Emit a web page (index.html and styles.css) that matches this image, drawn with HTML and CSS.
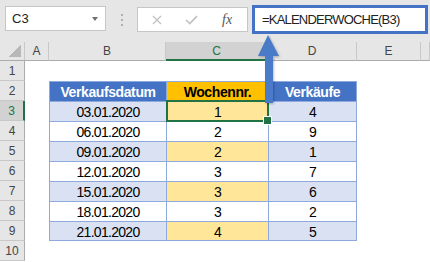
FILE: index.html
```html
<!DOCTYPE html>
<html lang="de">
  <head>
    <meta charset="utf-8">
    <title>KALENDERWOCHE</title>
    <link rel="stylesheet" href="styles.css">
  </head>
  <body>
    <div class="app">
      <div class="bar">
        <div class="namebox"><span>C3</span><i class="caret"></i></div>
        <div class="grip"><i></i><i></i><i></i></div>
        <div class="fxbox">
          <svg class="btn-x" width="10" height="10" viewBox="0 0 10 10"><path d="M1 1L9 9M9 1L1 9" stroke="#c2c2c2" stroke-width="1.3" fill="none"/></svg>
          <svg class="btn-ok" width="13" height="10" viewBox="0 0 13 10"><path d="M1 5L4.8 8.6L12 1.2" stroke="#c2c2c2" stroke-width="1.7" fill="none"/></svg>
          <span class="fx">fx</span>
        </div>
        <div class="formula">=KALENDERWOCHE(B3)</div>
      </div>

      <div class="sheet">
        <div class="ch corner"></div>
        <div class="ch">A</div>
        <div class="ch">B</div>
        <div class="ch sel">C</div>
        <div class="ch">D</div>
        <div class="ch">E</div>
        <div class="ch"></div>

        <div class="rh">1</div>
        <div></div><div></div><div></div><div></div><div></div><div></div>

        <div class="rh">2</div>
        <div></div>
        <div class="t hd">Verkaufsdatum</div>
        <div class="t hd wk">Wochennr.</div>
        <div class="t hd last">Verkäufe</div>
        <div></div><div></div>

        <div class="rh sel">3</div>
        <div></div>
        <div class="t alt">03.01.2020</div>
        <div class="t alt wk cur">1</div>
        <div class="t alt last">4</div>
        <div></div><div></div>

        <div class="rh">4</div>
        <div></div>
        <div class="t">06.01.2020</div>
        <div class="t">2</div>
        <div class="t last">9</div>
        <div></div><div></div>

        <div class="rh">5</div>
        <div></div>
        <div class="t alt">09.01.2020</div>
        <div class="t alt wk">2</div>
        <div class="t alt last">1</div>
        <div></div><div></div>

        <div class="rh">6</div>
        <div></div>
        <div class="t">12.01.2020</div>
        <div class="t">3</div>
        <div class="t last">7</div>
        <div></div><div></div>

        <div class="rh">7</div>
        <div></div>
        <div class="t alt">15.01.2020</div>
        <div class="t alt wk">3</div>
        <div class="t alt last">6</div>
        <div></div><div></div>

        <div class="rh">8</div>
        <div></div>
        <div class="t">18.01.2020</div>
        <div class="t">3</div>
        <div class="t last">2</div>
        <div></div><div></div>

        <div class="rh">9</div>
        <div></div>
        <div class="t alt end">21.01.2020</div>
        <div class="t alt wk end">4</div>
        <div class="t alt last end">5</div>
        <div></div><div></div>

        <div class="rh">10</div>
        <div></div><div></div><div></div><div></div><div></div><div></div>
      </div>

      <!-- pointer from the formula to the active cell -->
      <svg class="arrow" width="28" height="74" viewBox="0 0 28 74">
        <polygon points="13,2 24,23 18,23 18,70 10,70 10,23 3,23" fill="#4a7bc8"/>
      </svg>
    </div>
  </body>
</html>
```

FILE: styles.css
```css
* {
  box-sizing: border-box;
}
body {
  margin: 0;
  width: 430px;
  height: 262px;
  overflow: hidden;
  background: #fff;
  font-family: "Liberation Sans", Arial, sans-serif;
}
.app {
  position: relative;
}

/* formula bar */
.bar {
  height: 42px;
  padding: 6px 0 0 5px;
  background: #e6e6e6;
  display: flex;
  align-items: flex-start;
}
.namebox {
  width: 101px;
  height: 25px;
  border: 1px solid #c6c6c6;
  background: #fff;
  display: flex;
  align-items: center;
  padding: 0 7px 0 6px;
  font-size: 13px;
  color: #222;
}
.namebox span {
  flex: 1;
}
.caret {
  width: 0;
  height: 0;
  border-left: 3.5px solid transparent;
  border-right: 3.5px solid transparent;
  border-top: 4px solid #707070;
}
.grip {
  display: flex;
  flex-direction: column;
  gap: 3px;
  margin: 8px 14px 0 15px;
}
.grip i {
  width: 2px;
  height: 2px;
  background: #b0b0b0;
}
.fxbox {
  margin-top: 1px;
  width: 111px;
  height: 25px;
  border: 1px solid #c6c6c6;
  background: #fff;
  display: flex;
  align-items: center;
  padding-left: 14px;
}
.btn-x {
  margin-right: 23px;
}
.btn-ok {
  margin-right: 24px;
}
.fx {
  font-family: "Liberation Serif", serif;
  font-style: italic;
  font-size: 14px;
  color: #555;
}
.formula {
  margin: -1px 0 0 4px;
  width: 176px;
  height: 29px;
  border: 3px solid #4472c4;
  background: #fff;
  padding-left: 7px;
  font-size: 13px;
  line-height: 23px;
  letter-spacing: -0.8px;
  color: #222;
  white-space: nowrap;
}

/* grid */
.sheet {
  display: grid;
  grid-template-columns: 25px 24px 117px 102px 89px 64px 1fr;
  grid-template-rows: 19px;
  grid-auto-rows: 20px;
}
.ch, .rh {
  background: #e6e6e6;
  display: flex;
  align-items: center;
  justify-content: center;
  font-size: 12px;
  color: #444;
}
.ch {
  border-right: 1px solid #c8c8c8;
  border-bottom: 1px solid #ababab;
}
.rh {
  border-right: 1px solid #ababab;
  border-bottom: 1px solid #c8c8c8;
}
.ch.sel {
  background: #d2d2d2;
  color: #217346;
  border-bottom: 2px solid #217346;
}
.rh.sel {
  background: #d2d2d2;
  color: #217346;
  border-right: 2px solid #217346;
}
.corner {
  background: #e6e6e6 linear-gradient(to bottom right, transparent 50%, #b8b8b8 50%) no-repeat right 3px bottom 3px / 12px 12px;
}

/* table */
.t {
  border-left: 1px solid #8ea9db;
  border-top: 1px solid #8ea9db;
  display: flex;
  align-items: center;
  justify-content: center;
  padding-top: 1px;
  font-size: 14px;
  letter-spacing: -0.7px;
  color: #000;
}
.t.last {
  border-right: 1px solid #8ea9db;
}
.t.end {
  border-bottom: 1px solid #8ea9db;
}
.hd {
  font-weight: bold;
  letter-spacing: -0.4px;
  color: #fff;
  background: #4472c4;
}
.hd.wk {
  color: #000;
  background: #ffc000;
}
.alt {
  background: #d9e1f2;
}
.alt.wk {
  background: #ffe699;
}
.cur {
  position: relative;
}
.cur::after {
  content: '';
  position: absolute;
  left: -1px;
  top: -2px;
  right: -1px;
  bottom: -1px;
  border: 2px solid #217346;
  z-index: 1;
}
.cur::before {
  content: '';
  position: absolute;
  right: -4px;
  bottom: -4px;
  width: 7px;
  height: 7px;
  background: #217346;
  border: 1px solid #fff;
  z-index: 2;
}
.arrow {
  position: absolute;
  left: 255px;
  top: 33px;
  z-index: 3;
  filter: drop-shadow(1px 1px 1px rgba(0, 0, 0, 0.25));
}
```
